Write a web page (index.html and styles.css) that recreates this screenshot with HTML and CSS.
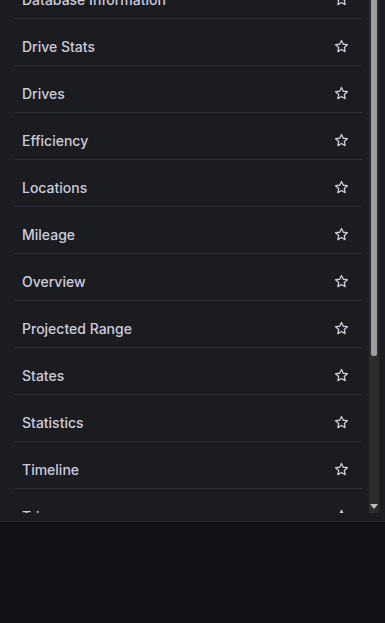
FILE: index.html
```html
<!DOCTYPE html>
<html>
<head>
	<title>Dashboards</title>
	<link rel="stylesheet" href="styles.css">
</head>
<body>
	<div class="panel">
		<div class="list-view">
			<ul class="list">
				<li class="row"><span>Database Information</span><svg class="star" viewBox="0 0 16 16"><path d="M8 1.6l1.9 4 4.4.5-3.3 3 .9 4.3L8 11.2l-3.9 2.2.9-4.3-3.3-3 4.4-.5z"/></svg></li>
				<li class="row"><span>Drive Stats</span><svg class="star" viewBox="0 0 16 16"><path d="M8 1.6l1.9 4 4.4.5-3.3 3 .9 4.3L8 11.2l-3.9 2.2.9-4.3-3.3-3 4.4-.5z"/></svg></li>
				<li class="row"><span>Drives</span><svg class="star" viewBox="0 0 16 16"><path d="M8 1.6l1.9 4 4.4.5-3.3 3 .9 4.3L8 11.2l-3.9 2.2.9-4.3-3.3-3 4.4-.5z"/></svg></li>
				<li class="row"><span>Efficiency</span><svg class="star" viewBox="0 0 16 16"><path d="M8 1.6l1.9 4 4.4.5-3.3 3 .9 4.3L8 11.2l-3.9 2.2.9-4.3-3.3-3 4.4-.5z"/></svg></li>
				<li class="row"><span>Locations</span><svg class="star" viewBox="0 0 16 16"><path d="M8 1.6l1.9 4 4.4.5-3.3 3 .9 4.3L8 11.2l-3.9 2.2.9-4.3-3.3-3 4.4-.5z"/></svg></li>
				<li class="row"><span>Mileage</span><svg class="star" viewBox="0 0 16 16"><path d="M8 1.6l1.9 4 4.4.5-3.3 3 .9 4.3L8 11.2l-3.9 2.2.9-4.3-3.3-3 4.4-.5z"/></svg></li>
				<li class="row"><span>Overview</span><svg class="star" viewBox="0 0 16 16"><path d="M8 1.6l1.9 4 4.4.5-3.3 3 .9 4.3L8 11.2l-3.9 2.2.9-4.3-3.3-3 4.4-.5z"/></svg></li>
				<li class="row"><span>Projected Range</span><svg class="star" viewBox="0 0 16 16"><path d="M8 1.6l1.9 4 4.4.5-3.3 3 .9 4.3L8 11.2l-3.9 2.2.9-4.3-3.3-3 4.4-.5z"/></svg></li>
				<li class="row"><span>States</span><svg class="star" viewBox="0 0 16 16"><path d="M8 1.6l1.9 4 4.4.5-3.3 3 .9 4.3L8 11.2l-3.9 2.2.9-4.3-3.3-3 4.4-.5z"/></svg></li>
				<li class="row"><span>Statistics</span><svg class="star" viewBox="0 0 16 16"><path d="M8 1.6l1.9 4 4.4.5-3.3 3 .9 4.3L8 11.2l-3.9 2.2.9-4.3-3.3-3 4.4-.5z"/></svg></li>
				<li class="row"><span>Timeline</span><svg class="star" viewBox="0 0 16 16"><path d="M8 1.6l1.9 4 4.4.5-3.3 3 .9 4.3L8 11.2l-3.9 2.2.9-4.3-3.3-3 4.4-.5z"/></svg></li>
				<li class="row"><span>Trip</span><svg class="star" viewBox="0 0 16 16"><path d="M8 1.6l1.9 4 4.4.5-3.3 3 .9 4.3L8 11.2l-3.9 2.2.9-4.3-3.3-3 4.4-.5z"/></svg></li>
			</ul>
		</div>
		<div class="scrollbar">
			<div class="thumb"></div>
			<div class="arrow"></div>
		</div>
	</div>
</body>
</html>
```

FILE: styles.css
```css
body {
	margin: 0;
	background-color: #111217;
	font-family: Inter, "Noto Sans", sans-serif;
	color: #ccccdc;
}
.panel {
	display: flex;
	height: 513px;
	padding-bottom: 8px;
	background-color: #1b1c20;
	border-bottom: 1px solid #2b2c31;
}
.list-view {
	flex: 1;
	overflow: hidden;
	padding: 0 7px 0 14px;
}
.list {
	list-style: none;
	margin: -28px 0 0 0;
	padding: 0;
}
.row {
	display: flex;
	align-items: center;
	justify-content: space-between;
	height: 38px;
	padding: 8px 13px 0 8px;
	border-bottom: 1px solid #2c2d32;
	font-size: 14px;
	font-weight: 500;
}
.star {
	width: 15px;
	height: 15px;
	fill: none;
	stroke: #ccccdc;
	stroke-width: 1.4;
	stroke-linejoin: round;
}
.scrollbar {
	display: flex;
	flex-direction: column;
	width: 10px;
	margin-right: 6px;
	background-color: #2c2c2e;
}
.thumb {
	height: 356px;
	margin: 0 2px;
	background-color: #9e9e9e;
	border-radius: 0 0 2px 2px;
}
.arrow {
	margin: auto auto 4px auto;
	width: 0;
	height: 0;
	border-left: 4px solid transparent;
	border-right: 4px solid transparent;
	border-top: 5px solid #bdbdbd;
}
```
